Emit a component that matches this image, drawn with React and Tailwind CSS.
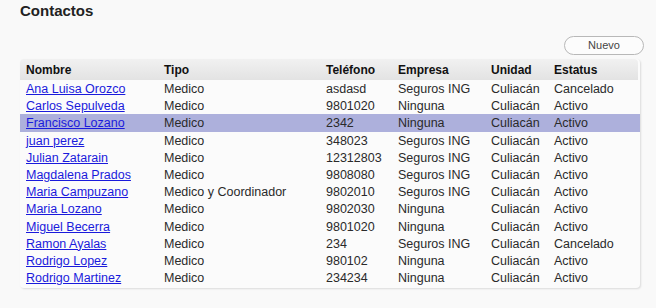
import React from "react";

const rows = [
  ["Ana Luisa Orozco", "Medico", "asdasd", "Seguros ING", "Culiacán", "Cancelado"],
  ["Carlos Sepulveda", "Medico", "9801020", "Ninguna", "Culiacán", "Activo"],
  ["Francisco Lozano", "Medico", "2342", "Ninguna", "Culiacán", "Activo"],
  ["juan perez", "Medico", "348023", "Seguros ING", "Culiacán", "Activo"],
  ["Julian Zatarain", "Medico", "12312803", "Seguros ING", "Culiacán", "Activo"],
  ["Magdalena Prados", "Medico", "9808080", "Seguros ING", "Culiacán", "Activo"],
  ["Maria Campuzano", "Medico y Coordinador", "9802010", "Seguros ING", "Culiacán", "Activo"],
  ["Maria Lozano", "Medico", "9802030", "Ninguna", "Culiacán", "Activo"],
  ["Miguel Becerra", "Medico", "9801020", "Ninguna", "Culiacán", "Activo"],
  ["Ramon Ayalas", "Medico", "234", "Seguros ING", "Culiacán", "Cancelado"],
  ["Rodrigo Lopez", "Medico", "980102", "Ninguna", "Culiacán", "Activo"],
  ["Rodrigo Martinez", "Medico", "234234", "Ninguna", "Culiacán", "Activo"],
];

const cols = "grid grid-cols-[138px_162px_72px_93px_63px_1fr] pl-[6px] items-center";

export default function App() {
  return (
    <div
      className="w-[656px] h-[308px] bg-[#f9f9f9] text-[#2a2a2a] overflow-hidden"
      style={{ fontFamily: '"Liberation Sans", Arial, sans-serif' }}
    >
      <div className="pl-[20px] pt-[2px] h-[36px]">
        <h1 className="text-[15px] font-bold leading-[18px] text-[#222]">Contactos</h1>
      </div>
      <div className="flex justify-end pr-[12px] h-[23px] items-start">
        <button className="w-[80px] h-[19px] rounded-full border border-[#b8b8b8] bg-[#fcfcfc] text-[11px] text-[#444] leading-none">
          Nuevo
        </button>
      </div>
      <div className="ml-[20px] w-[620px] bg-[#fbfbfb] rounded-[4px] shadow-[1px_1px_2px_rgba(0,0,0,0.12)] pb-[2px]">
        <div className={`${cols} h-[21px] bg-gradient-to-b from-[#f1f1f1] to-[#e3e3e3] rounded-t-[4px] w-[618px] text-[12px] font-bold text-[#111]`}>
          <div>Nombre</div>
          <div>Tipo</div>
          <div>Teléfono</div>
          <div>Empresa</div>
          <div>Unidad</div>
          <div>Estatus</div>
        </div>
        {rows.map((r, i) => (
          <div
            key={i}
            className={`${cols} h-[17.2px] text-[12.5px] leading-[15px] pt-[2px] ${i === 2 ? "bg-[#adb0dc]" : ""}`}
          >
            <div>
              <a href="#" className="text-[#1a1adc] underline">{r[0]}</a>
            </div>
            <div>{r[1]}</div>
            <div>{r[2]}</div>
            <div>{r[3]}</div>
            <div>{r[4]}</div>
            <div>{r[5]}</div>
          </div>
        ))}
      </div>
    </div>
  );
}
